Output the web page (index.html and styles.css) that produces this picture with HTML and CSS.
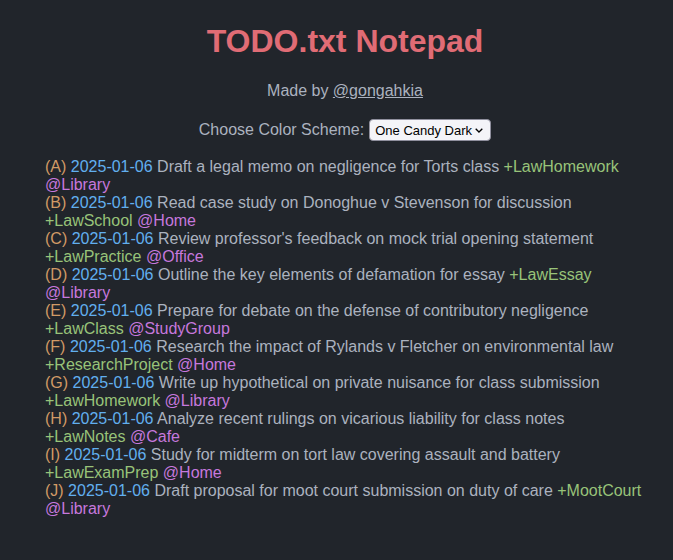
FILE: index.html
```html
<!DOCTYPE html>
<html>
<head>
<meta charset="utf-8">
<link rel="stylesheet" href="styles.css">
</head>
<body>
<div class="page">
<header class="header">
  <h1 class="title">TODO.txt Notepad</h1>
  <p class="credit">Made by <a class="credit-link" href="#">@gongahkia</a></p>
  <div class="scheme">
    <label class="scheme-label" for="scheme">Choose Color Scheme:</label>
    <select class="scheme-select" id="scheme">
      <option>One Candy Dark</option>
    </select>
  </div>
</header>
<div class="todo">
  <div class="item"><span class="pri">(A)</span> <span class="date">2025-01-06</span> Draft a legal memo on negligence for Torts class <span class="proj">+LawHomework</span> <span class="ctx">@Library</span></div>
  <div class="item"><span class="pri">(B)</span> <span class="date">2025-01-06</span> Read case study on Donoghue v Stevenson for discussion <span class="proj">+LawSchool</span> <span class="ctx">@Home</span></div>
  <div class="item"><span class="pri">(C)</span> <span class="date">2025-01-06</span> Review professor's feedback on mock trial opening statement <span class="proj">+LawPractice</span> <span class="ctx">@Office</span></div>
  <div class="item"><span class="pri">(D)</span> <span class="date">2025-01-06</span> Outline the key elements of defamation for essay <span class="proj">+LawEssay</span> <span class="ctx">@Library</span></div>
  <div class="item"><span class="pri">(E)</span> <span class="date">2025-01-06</span> Prepare for debate on the defense of contributory negligence <span class="proj">+LawClass</span> <span class="ctx">@StudyGroup</span></div>
  <div class="item"><span class="pri">(F)</span> <span class="date">2025-01-06</span> Research the impact of Rylands v Fletcher on environmental law <span class="proj">+ResearchProject</span> <span class="ctx">@Home</span></div>
  <div class="item"><span class="pri">(G)</span> <span class="date">2025-01-06</span> Write up hypothetical on private nuisance for class submission <span class="proj">+LawHomework</span> <span class="ctx">@Library</span></div>
  <div class="item"><span class="pri">(H)</span> <span class="date">2025-01-06</span> Analyze recent rulings on vicarious liability for class notes <span class="proj">+LawNotes</span> <span class="ctx">@Cafe</span></div>
  <div class="item"><span class="pri">(I)</span> <span class="date">2025-01-06</span> Study for midterm on tort law covering assault and battery <span class="proj">+LawExamPrep</span> <span class="ctx">@Home</span></div>
  <div class="item"><span class="pri">(J)</span> <span class="date">2025-01-06</span> Draft proposal for moot court submission on duty of care <span class="proj">+MootCourt</span> <span class="ctx">@Library</span></div>
</div>
</div>
</body>
</html>
```
FILE: styles.css
```css
html, body {
  background: #21252b;
}
body {
  margin: 0;
  padding: 0;
  color: #abb2bf;
  font-family: "Liberation Sans", Arial, sans-serif;
  font-size: 16px;
}
.page {
  width: 600px;
  padding-left: 45px;
}
.header {
  text-align: center;
}
.title {
  margin: 0;
  padding-top: 23px;
  font-size: 32px;
  font-weight: bold;
  color: #e06c75;
  line-height: 37px;
}
.credit {
  margin: 22px 0 0;
  line-height: 18px;
}
.credit-link {
  color: #abb2bf;
}
.scheme {
  margin-top: 19px;
  display: flex;
  justify-content: center;
  align-items: center;
  gap: 5px;
}
.scheme-select {
  -webkit-appearance: none;
  appearance: none;
  font-family: "Liberation Sans", Arial, sans-serif;
  font-size: 13px;
  height: 22px;
  width: 122px;
  background-color: #f4f4f8;
  background-image: url("data:image/svg+xml,%3Csvg xmlns='http://www.w3.org/2000/svg' width='8' height='5' viewBox='0 0 8 5'%3E%3Cpath d='M0.7 0.7 L4 4 L7.3 0.7' fill='none' stroke='%23000' stroke-width='1.3'/%3E%3C/svg%3E");
  background-repeat: no-repeat;
  background-position: right 7px center;
  color: #000;
  border: 1px solid #8f8f9d;
  border-radius: 4px;
  padding: 0 16px 0 5px;
  margin: 0;
}
.todo {
  margin-top: 17px;
  line-height: 18px;
}
.pri { color: #d19a66; }
.date { color: #61afef; }
.proj { color: #98c379; }
.ctx { color: #c678dd; }
```
